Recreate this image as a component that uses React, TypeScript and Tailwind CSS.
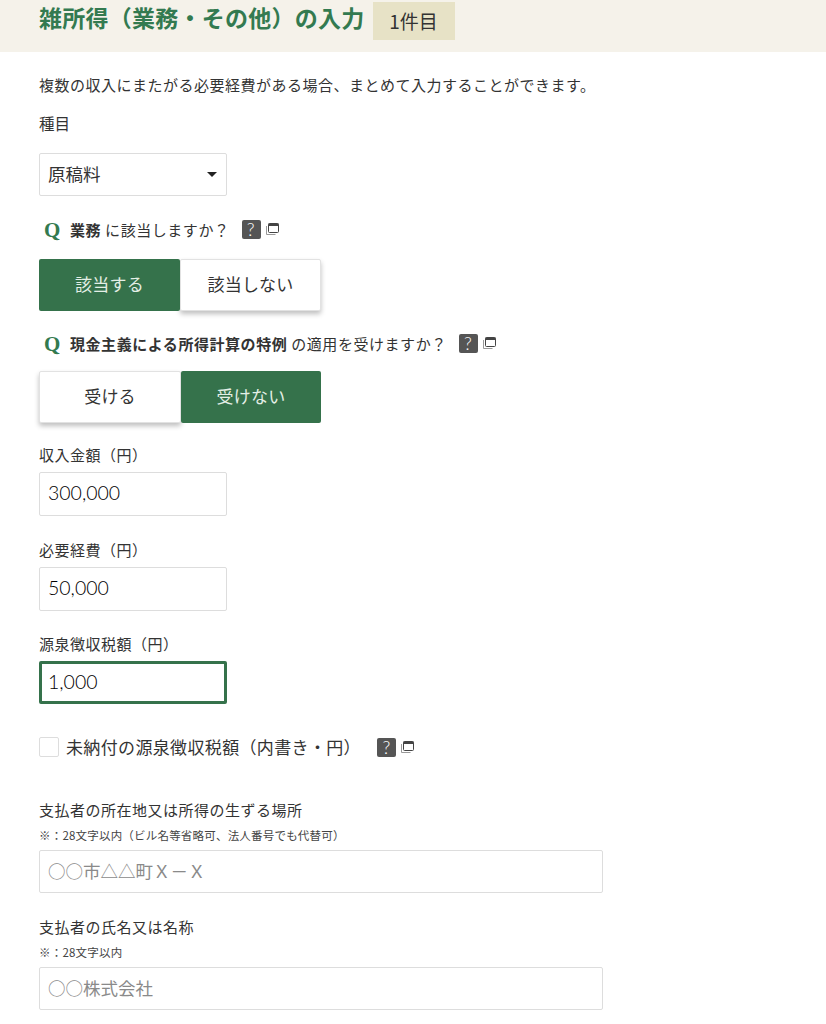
import { ReactNode } from "react";

const jp = "font-['Noto_Sans_CJK_JP','Noto_Sans',sans-serif]";

function Help() {
  return (
    <span className="mt-[1px] inline-flex items-center">
      <span className="flex h-[19px] w-[19px] items-center justify-center rounded-[2px] bg-[#555555] font-['Lato',sans-serif] text-[18px] font-light leading-none text-white">?</span>
      <svg width="13" height="12" viewBox="0 0 13 12" className="ml-[5px]" fill="none">
        <path d="M0.5 3v8.5h9" stroke="#999999" strokeWidth="1" />
        <rect x="2.5" y="0.5" width="10" height="9" rx="1" fill="#fff" stroke="#444444" strokeWidth="1" />
        <rect x="2.5" y="0.5" width="10" height="2.5" fill="#444444" />
      </svg>
    </span>
  );
}

function Question({ children, className }: { children: ReactNode; className: string }) {
  return (
    <div className={`ml-[5px] flex h-[24px] items-center text-[15px] tracking-[0.55px] text-[#333333] ${className}`}>
      <span className="mr-[10px] w-[16px] font-['Liberation_Serif',serif] text-[21px] font-bold leading-none text-[#337a50]">Q</span>
      {children}
    </div>
  );
}

function Toggle({ left, right, active, leftWidth }: { left: string; right: string; active: "left" | "right"; leftWidth: string }) {
  const on = "bg-[#35724b] text-[#e4efe6] rounded-[2px] z-10";
  const off = "bg-white text-[#333333] border border-[#e2e2e2] shadow-[0_3px_5px_rgba(0,0,0,0.25)] rounded-[2px]";
  return (
    <div className="flex h-[52px] w-[282px]">
      <button className={`relative shrink-0 pb-[3px] text-[17px] tracking-[0.2px] ${leftWidth} ${active === "left" ? on : off}`}>{left}</button>
      <button className={`relative flex-1 pb-[3px] text-[17px] tracking-[0.2px] ${active === "right" ? on : off}`}>{right}</button>
    </div>
  );
}

function AmountField({ label, value, focused, className }: { label: string; value: string; focused?: boolean; className: string }) {
  return (
    <div className={className}>
      <label className="block h-[22px] text-[15px] leading-[22px] tracking-[0.5px] text-[#333333]">{label}</label>
      <input
        readOnly
        value={value}
        className={`mt-[6px] block w-[188px] rounded-[2px] bg-white pb-[3px] font-['Lato','Noto_Sans',sans-serif] text-[19.5px] font-light text-[#000000] outline-none ${
          focused ? "h-[43px] border-[3px] border-[#35724b] px-[6px]" : "h-[44px] border border-[#dddddd] px-[8px]"
        }`}
      />
    </div>
  );
}

function PayerField({ label, note, placeholder, className }: { label: string; note: string; placeholder: string; className: string }) {
  return (
    <div className={className}>
      <label className="block h-[22px] text-[15px] leading-[22px] tracking-[0.5px] text-[#333333]">{label}</label>
      <p className="mt-[5px] h-[18px] text-[11.5px] leading-[18px] tracking-[0.2px] text-[#444444]">{note}</p>
      <input
        readOnly
        placeholder={placeholder}
        className="mt-[6px] block h-[43px] w-[564px] rounded-[2px] border border-[#dddddd] bg-white px-[8px] pb-[3px] text-[17.5px] outline-none placeholder:text-[#8a8a8a]"
      />
    </div>
  );
}

export default function App() {
  return (
    <div className={`min-h-[1024px] w-[826px] overflow-hidden bg-white ${jp}`}>
      <header className="flex h-[52px] items-start bg-[#f5f2ea] pl-[39px]">
        <h1 className="text-[23px] font-bold leading-[34px] tracking-[0.25px] text-[#337a50]">雑所得（業務・その他）の入力</h1>
        <span className="ml-[8px] mt-[2px] flex h-[38px] w-[82px] items-center justify-center bg-[#e7e2c6] text-[19px] text-[#333333]">1件目</span>
      </header>

      <main className="px-[39px]">
        <p className="mt-[22px] h-[22px] text-[15px] leading-[22px] tracking-[0.5px] text-[#333333]">
          複数の収入にまたがる必要経費がある場合、まとめて入力することができます。
        </p>
        <p className="mt-[16px] h-[22px] text-[15.5px] leading-[22px] text-[#333333]">種目</p>

        <div className="relative mt-[19px] w-[188px]">
          <select className="block h-[43px] w-full appearance-none rounded-[2px] border border-[#dddddd] bg-white px-[8px] pb-[1px] text-[17.5px] text-[#333333] outline-none">
            <option>原稿料</option>
          </select>
          <span className="absolute right-[10px] top-[19px] h-0 w-0 border-x-[5px] border-t-[5px] border-x-transparent border-t-[#222222]" />
        </div>

        <Question className="mt-[22px]">
          <b className="font-bold">業務</b>
          <span className="ml-[4px]">に該当しますか？</span>
          <span className="ml-[12px]"><Help /></span>
        </Question>

        <div className="mt-[17px]">
          <Toggle left="該当する" right="該当しない" active="left" leftWidth="w-[141px]" />
        </div>

        <Question className="mt-[21px]">
          <b className="font-bold">現金主義による所得計算の特例</b>
          <span className="ml-[4px]">の適用を受けますか？</span>
          <span className="ml-[12px]"><Help /></span>
        </Question>

        <div className="mt-[15px]">
          <Toggle left="受ける" right="受けない" active="right" leftWidth="w-[142px]" />
        </div>

        <AmountField className="mt-[21px]" label="収入金額（円）" value="300,000" />
        <AmountField className="mt-[23px]" label="必要経費（円）" value="50,000" />
        <AmountField className="mt-[22px]" label="源泉徴収税額（円）" value="1,000" focused />

        <div className="mt-[31px] flex h-[24px] items-center">
          <span className="h-[20px] w-[20px] rounded-[2px] border border-[#dddddd] bg-white" />
          <span className="ml-[7px] text-[17px] tracking-[0.35px] text-[#333333]">未納付の源泉徴収税額（内書き・円）</span>
          <span className="ml-[16px]"><Help /></span>
        </div>

        <PayerField className="mt-[40px]" label="支払者の所在地又は所得の生ずる場所" note="※：28文字以内（ビル名等省略可、法人番号でも代替可）" placeholder="○○市△△町Ｘ－Ｘ" />
        <PayerField className="mt-[23px]" label="支払者の氏名又は名称" note="※：28文字以内" placeholder="○○株式会社" />
      </main>
    </div>
  );
}
